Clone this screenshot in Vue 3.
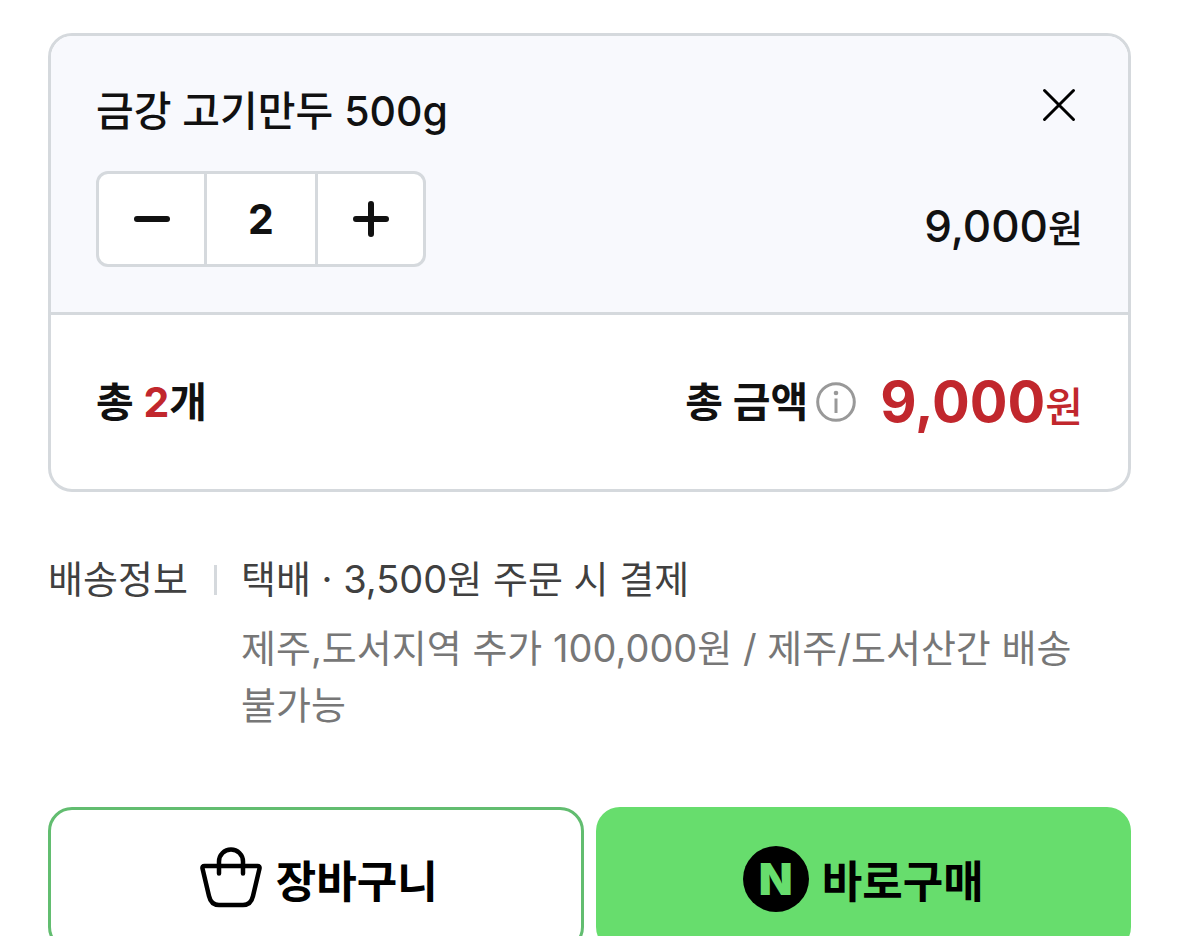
<script setup>
import { computed, ref } from 'vue'

const unitPrice = 4500
const quantity = ref(2)
const total = computed(() => (unitPrice * quantity.value).toLocaleString('en-US'))

function step(amount) {
  quantity.value = Math.max(1, Number(quantity.value) + amount)
}
</script>

<template>
  <main class="page">
    <section class="card" aria-label="선택한 상품">
      <div class="option">
        <div class="option-head">
          <h1 class="name">금강 고기만두 500g</h1>
          <button class="icon-button" type="button" aria-label="삭제">
            <svg width="48" height="48" viewBox="0 0 48 48" fill="none" stroke="#000" stroke-width="3" stroke-linecap="round">
              <path d="M9.500 9.500l29 29M38.500 9.500l-29 29" />
            </svg>
          </button>
        </div>
        <div class="option-body">
          <div class="stepper">
            <button type="button" aria-label="수량 감소" @click="step(-1)">
              <svg width="36" height="36" viewBox="0 0 36 36" fill="none" stroke="#111" stroke-width="6" stroke-linecap="round">
                <path d="M3 18h30" />
              </svg>
            </button>
            <input v-model="quantity" type="text" inputmode="numeric" aria-label="수량" />
            <button type="button" aria-label="수량 증가" @click="step(1)">
              <svg width="36" height="36" viewBox="0 0 36 36" fill="none" stroke="#111" stroke-width="6" stroke-linecap="round">
                <path d="M3 18h30M18 3v30" />
              </svg>
            </button>
          </div>
          <p class="price">{{ total }}<span>원</span></p>
        </div>
      </div>
      <div class="summary">
        <p class="count">총 <em>{{ quantity }}</em>개</p>
        <div class="total">
          <span class="total-label">총 금액</span>
          <button class="info" type="button" aria-label="총 금액 안내">
            <svg width="40" height="40" viewBox="0 0 40 40" fill="none">
              <circle cx="20" cy="20" r="18.300" stroke="#999" stroke-width="3" />
              <circle cx="20" cy="11" r="2.300" fill="#999" />
              <path d="M20 16.500v14.500" stroke="#999" stroke-width="3" />
            </svg>
          </button>
          <strong class="total-price">{{ total }}<span>원</span></strong>
        </div>
      </div>
    </section>

    <section class="delivery">
      <h2>배송정보</h2>
      <div class="delivery-text">
        <p class="fee">택배 · 3,500원 주문 시 결제</p>
        <p class="extra">제주,도서지역 추가 100,000원 / 제주/도서산간 배송 불가능</p>
      </div>
    </section>

    <div class="actions">
      <button class="action cart" type="button">
        <svg width="64" height="64" viewBox="0 0 64 64" fill="none" stroke="#000" stroke-width="4.500" stroke-linecap="round" stroke-linejoin="round">
          <path d="M5.500 19h53q2.500 0 2 2.500l-6.500 27.500Q52 58 44 58H20Q12 58 10 49L3.500 21.500Q3 19 5.500 19z" />
          <path d="M20 26.500V14.500a12 12 0 0 1 24 0V26.500" />
        </svg>
        <span>장바구니</span>
      </button>
      <button class="action buy" type="button">
        <span class="logo" aria-hidden="true">N</span>
        <span>바로구매</span>
      </button>
    </div>
  </main>
</template>

<style>
body {
  margin: 0;
  background: #fff;
}
</style>

<style scoped>
.page {
  box-sizing: border-box;
  padding: 33px 48px 0;
  font-family: Inter, "Noto Sans CJK KR", sans-serif;
  color: #111;
}
.page * {
  box-sizing: border-box;
}
h1,
h2,
p {
  margin: 0;
}
button,
input {
  padding: 0;
  border: 0;
  background: none;
  color: inherit;
  font-family: inherit;
}
button {
  display: flex;
  align-items: center;
  justify-content: center;
  cursor: pointer;
}
svg {
  display: block;
}
.card {
  overflow: hidden;
  border: 3px solid #d5d9dd;
  border-radius: 24px;
}
.option {
  padding: 45px;
  background: #f8f9fd;
}
.option-head {
  display: flex;
  align-items: flex-start;
  justify-content: space-between;
}
.name {
  font-size: 41px;
  font-weight: 500;
  line-height: 60px;
}
.icon-button {
  width: 48px;
  height: 48px;
}
.option-body {
  display: flex;
  align-items: center;
  justify-content: space-between;
  margin-top: 30px;
}
.stepper {
  display: grid;
  grid-template-columns: 105px 114px 105px;
  width: 330px;
  height: 96px;
  overflow: hidden;
  border: 3px solid #d5d9dd;
  border-radius: 12px;
  background: #fff;
}
.stepper input {
  width: 100%;
  border: solid #d5d9dd;
  border-width: 0 3px;
  border-radius: 0;
  text-align: center;
  font-size: 41px;
  font-weight: 700;
}
.price {
  padding-top: 14px;
  font-size: 44px;
  font-weight: 500;
  line-height: 60px;
}
.price span {
  font-size: 38px;
  line-height: 1;
}
.summary {
  display: flex;
  align-items: center;
  justify-content: space-between;
  padding: 54px 45px;
  border-top: 3px solid #d5d9dd;
}
.count,
.total-label {
  font-size: 41px;
  font-weight: 700;
  line-height: 66px;
}
.count em {
  color: #c1272d;
  font-style: normal;
}
.total {
  display: flex;
  align-items: center;
}
.info {
  margin: 0 24px 0 8px;
}
.total-price {
  color: #c1272d;
  font-size: 56px;
  font-weight: 700;
  line-height: 66px;
}
.total-price span {
  font-size: 41px;
  font-weight: 500;
  line-height: 1;
}
.delivery {
  display: flex;
  padding-top: 59px;
  font-size: 38px;
  line-height: 57px;
}
.delivery h2 {
  display: flex;
  flex: none;
  align-items: center;
  justify-content: space-between;
  width: 169px;
  height: 57px;
  margin-right: 24px;
  color: #404040;
  font-size: 38px;
  font-weight: 400;
}
.delivery h2::after {
  width: 3px;
  height: 30px;
  background: #d5d9dd;
  content: "";
}
.delivery-text {
  flex: 1;
  min-width: 0;
}
.fee {
  color: #404040;
}
.extra {
  margin-top: 12px;
  color: #777;
  word-break: keep-all;
}
.actions {
  display: grid;
  grid-template-columns: 1fr 1fr;
  gap: 12px;
  padding-top: 73px;
}
.action {
  height: 144px;
  border-radius: 24px;
  color: #000;
  font-size: 44px;
  font-weight: 700;
}
.cart {
  gap: 13px;
  padding-left: 5px;
  border: 3px solid #62bd70;
}
.buy {
  gap: 13px;
  background: #67dd6d;
}
.logo {
  display: grid;
  place-items: center;
  width: 66px;
  height: 66px;
  border-radius: 50%;
  background: #000;
  color: #67dd6d;
  font-size: 44px;
  font-weight: 900;
  line-height: 66px;
}
</style>
